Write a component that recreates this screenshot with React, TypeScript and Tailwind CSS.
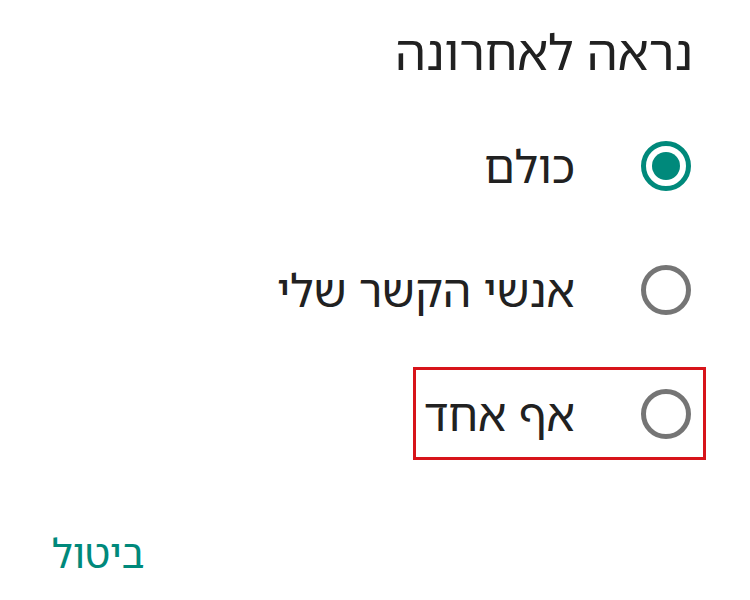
export default function App() {
  const options = [
    { label: 'כולם', checked: true, boxed: false },
    { label: 'אנשי הקשר שלי', checked: false, boxed: false },
    { label: 'אף אחד', checked: false, boxed: true },
  ];

  return (
    <div
      dir="rtl"
      className="w-[750px] h-[600px] bg-white overflow-hidden"
      style={{ fontFamily: '"Noto Sans Hebrew", "DejaVu Sans", "Liberation Sans", sans-serif' }}
    >
      <h1 className="pr-[57px] pt-[21px] text-[49px] leading-[60px] text-[#212121] font-normal">
        נראה לאחרונה
      </h1>

      <div className="flex flex-col items-start pr-[44px] mt-[38px] gap-[31px]">
        {options.map((o) => (
          <div
            key={o.label}
            className={`flex items-center h-[93px] pr-[12px] pl-[8px] gap-[66px] border-[3px] ${
              o.boxed ? 'border-[#d7141a]' : 'border-transparent'
            }`}
          >
            <span
              className={`w-[50px] h-[50px] rounded-full border-[5px] flex items-center justify-center ${
                o.checked ? 'border-[#00897b]' : 'border-[#757575]'
              }`}
            >
              {o.checked && <span className="w-[28px] h-[28px] rounded-full bg-[#00897b]" />}
            </span>
            <span className="text-[45px] leading-none text-[#212121]">{o.label}</span>
          </div>
        ))}
      </div>

      <div dir="ltr" className="pl-[52px] mt-[73px]">
        <span dir="rtl" className="text-[40px] leading-none text-[#00897b]">
          ביטול
        </span>
      </div>
    </div>
  );
}
